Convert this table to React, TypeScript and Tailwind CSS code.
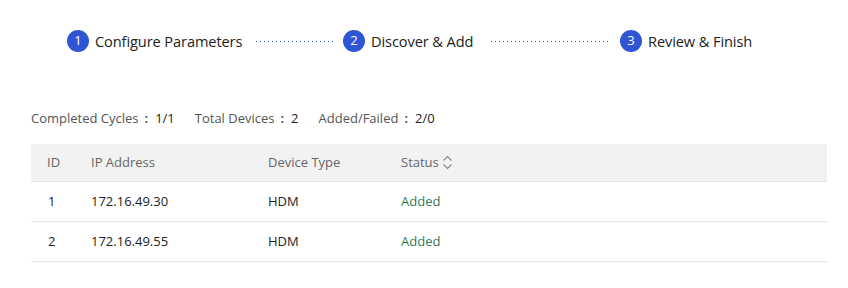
import React from 'react';

const steps = [
  { n: 1, label: 'Configure Parameters', w: 146 },
  { n: 2, label: 'Discover & Add', w: 105 },
  { n: 3, label: 'Review & Finish', w: 104 },
];

const rows = [
  { id: 1, ip: '172.16.49.30', type: 'HDM', status: 'Added' },
  { id: 2, ip: '172.16.49.55', type: 'HDM', status: 'Added' },
];

function Dots({ width }: { width: number }) {
  return (
    <div
      className="h-px bg-[linear-gradient(to_right,#2f55d4_1px,transparent_1px)] bg-[length:4px_1px] bg-repeat-x"
      style={{ width }}
    />
  );
}

function SortIcon() {
  return (
    <svg width="11" height="15" viewBox="0 0 11 15" className="ml-[3px]">
      <path d="M1.5 5.5 L5.5 1.5 L9.5 5.5" fill="none" stroke="#8a8a8a" strokeWidth="1.2" />
      <path d="M1.5 9.5 L5.5 13.5 L9.5 9.5" fill="none" stroke="#8a8a8a" strokeWidth="1.2" />
    </svg>
  );
}

function Step({ n, label, w }: { n: number; label: string; w: number }) {
  return (
    <div className="flex items-center">
      <div className="w-[22px] h-[22px] rounded-full bg-[#2f55d4] text-white text-[13px] flex items-center justify-center">{n}</div>
      <span
        className="ml-[6px] text-[14.6px] tracking-[-0.1px] text-[#222] leading-none whitespace-nowrap"
        style={{ width: w }}
      >
        {label}
      </span>
    </div>
  );
}

function Stat({ label, value }: { label: string; value: string }) {
  return (
    <span className="flex items-center">
      {label}
      <span className="ml-[6px] mr-[7px] font-semibold text-[#333]">:</span>
      <span className="text-[#222]">{value}</span>
    </span>
  );
}

export default function App() {
  return (
    <div
      className="w-[848px] h-[288px] bg-white text-[#333]"
      style={{ fontFamily: '"Open Sans", "Liberation Sans", sans-serif' }}
    >
      {/* Stepper */}
      <div className="flex items-center pl-[67px] pt-[30px] h-[52px]">
        <Step {...steps[0]} />
        <div className="ml-[15px]"><Dots width={77} /></div>
        <div className="ml-[10px]"><Step {...steps[1]} /></div>
        <div className="ml-[15px]"><Dots width={120} /></div>
        <div className="ml-[9px]"><Step {...steps[2]} /></div>
      </div>

      {/* Stats */}
      <div className="flex items-center gap-[20px] pl-[31px] mt-[57px] text-[13px] text-[#555]">
        <Stat label="Completed Cycles" value="1/1" />
        <Stat label="Total Devices" value="2" />
        <Stat label="Added/Failed" value="2/0" />
      </div>

      {/* Table */}
      <div className="mx-[31px] mt-[15px] w-[796px] text-[13px]">
        <div className="flex items-center h-[38px] pt-[1px] bg-[#f2f2f2] border-b border-[#e4e4e4] text-[#666]">
          <div className="w-[60px] pl-[16px]">ID</div>
          <div className="w-[177px]">IP Address</div>
          <div className="w-[133px]">Device Type</div>
          <div className="flex items-center">Status<SortIcon /></div>
        </div>
        {rows.map((r) => (
          <div key={r.id} className="flex items-center h-[40px] pt-[2px] border-b border-[#e4e4e4] text-[#222]">
            <div className="w-[60px] pl-[17px]">{r.id}</div>
            <div className="w-[177px]">{r.ip}</div>
            <div className="w-[133px]">{r.type}</div>
            <div className="text-[#2e7d55]">{r.status}</div>
          </div>
        ))}
      </div>
    </div>
  );
}
